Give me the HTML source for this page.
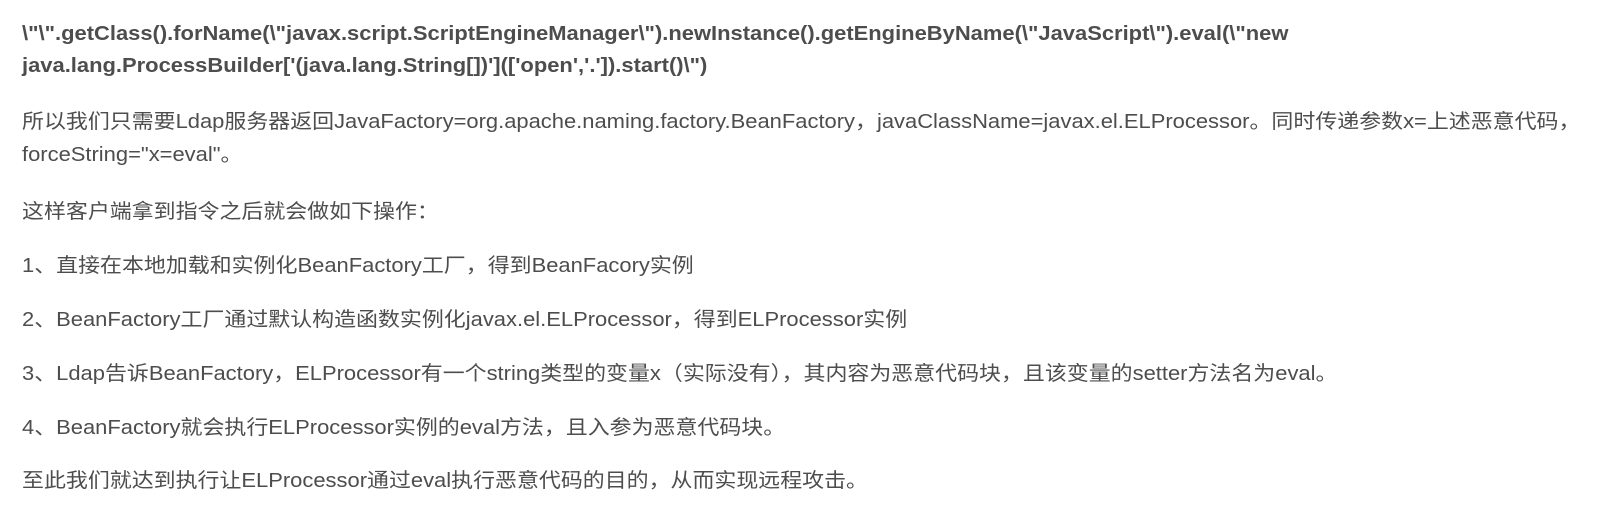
<!DOCTYPE html>
<html><head><meta charset="utf-8"><style>
body{margin:0;background:#fff;}
.c{position:absolute;left:22px;top:0;width:1560px;font-family:"Liberation Sans","Noto Sans CJK SC",sans-serif;font-size:20px;color:#4d4d4d;}
.l{position:absolute;left:0;white-space:nowrap;line-height:32px;transform:scaleX(1.097);transform-origin:0 0;}
b{color:#4d4d4d;}
</style></head><body><div class="c">
<div class="l" style="top:18px"><b>\"\".getClass().forName(\"javax.script.ScriptEngineManager\").newInstance().getEngineByName(\"JavaScript\").eval(\"new</b></div>
<div class="l" style="top:50px"><b>java.lang.ProcessBuilder['(java.lang.String[])'](['open','.']).start()\")</b></div>
<div class="l" style="top:106px">所以我们只需要Ldap服务器返回JavaFactory=org.apache.naming.factory.BeanFactory，javaClassName=javax.el.ELProcessor。同时传递参数x=上述恶意代码，</div>
<div class="l" style="top:139px">forceString="x=eval"。</div>
<div class="l" style="top:196px">这样客户端拿到指令之后就会做如下操作：</div>
<div class="l" style="top:250px">1、直接在本地加载和实例化BeanFactory工厂，得到BeanFacory实例</div>
<div class="l" style="top:304px">2、BeanFactory工厂通过默认构造函数实例化javax.el.ELProcessor，得到ELProcessor实例</div>
<div class="l" style="top:358px">3、Ldap告诉BeanFactory，ELProcessor有一个string类型的变量x（实际没有），其内容为恶意代码块，且该变量的setter方法名为eval。</div>
<div class="l" style="top:412px">4、BeanFactory就会执行ELProcessor实例的eval方法，且入参为恶意代码块。</div>
<div class="l" style="top:465px">至此我们就达到执行让ELProcessor通过eval执行恶意代码的目的，从而实现远程攻击。</div>
</div></body></html>
